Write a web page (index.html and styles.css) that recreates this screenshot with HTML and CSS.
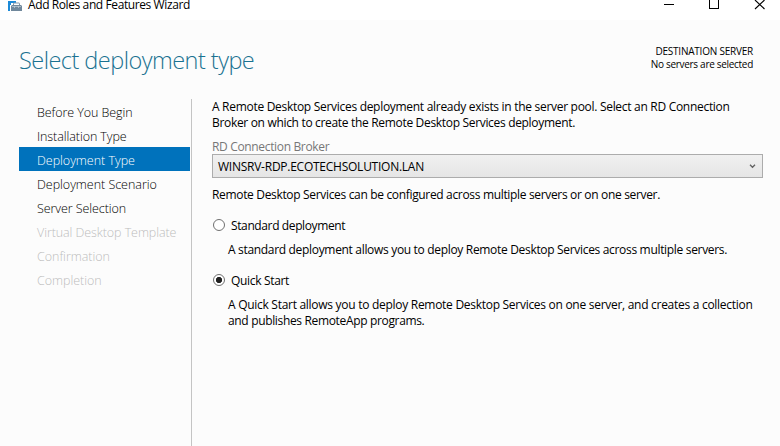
FILE: index.html
```html
<!DOCTYPE html>
<html lang="en">
<head>
<meta charset="utf-8">
<title>Add Roles and Features Wizard</title>
<link rel="stylesheet" href="styles.css">
</head>
<body>
<header class="titlebar">
  <svg class="app-icon" width="16" height="12" viewBox="0 0 16 12">
    <path d="M0 1H8V3H3V5H2V11H0Z" fill="#1c8ad8"/>
    <path d="M5.5 5V3.5Q5.5 3 6 3H11Q11.5 3 11.5 3.5V5" fill="none" stroke="#8295a6"/>
    <path d="M3 6L4 5H13L14 6V11H3Z" fill="#70889c"/>
    <path d="M4 6.5H13" stroke="#c3ced7" stroke-width=".7"/>
    <path d="M6.5 6V8M10.5 6V8" stroke="#c3ced7" stroke-width=".7"/>
  </svg>
  <span class="app-name">Add Roles and Features Wizard</span>
  <svg class="controls" width="104" height="10" viewBox="0 0 104 10" fill="none" stroke="#000" shape-rendering="crispEdges">
    <path d="M0 4.5H10M45.5 -1V8.5H54.5V-1"/>
    <path d="M91 0L100.5 9M100.5 0L91 9" shape-rendering="auto" stroke-width="1.1"/>
  </svg>
</header>
<section class="heading">
  <h1>Select deployment type</h1>
  <div class="destination">
    <div class="dest-label">DESTINATION SERVER</div>
    <div class="dest-value">No servers are selected</div>
  </div>
</section>
<div class="content">
  <nav class="steps">
    <a class="step t06">Before You Begin</a>
    <a class="step t06">Installation Type</a>
    <a class="step active">Deployment Type</a>
    <a class="step">Deployment Scenario</a>
    <a class="step t06">Server Selection</a>
    <a class="step disabled t06">Virtual Desktop Template</a>
    <a class="step disabled">Confirmation</a>
    <a class="step disabled">Completion</a>
  </nav>
  <main class="page">
    <p><span class="t295">A Remote Desktop Services deployment already exists in the server pool. Select an RD Connection</span><br><span class="t32">Broker on which to create the Remote Desktop Services deployment.</span></p>
    <div class="field-label t34">RD Connection Broker</div>
    <div class="combo">
      <span class="combo-value t27">WINSRV-RDP.ECOTECHSOLUTION.LAN</span>
      <svg class="arrow" width="7" height="5" viewBox="0 0 7 5" fill="none" stroke="#606060" stroke-width="1.3"><path d="M1 .8L3.5 3.3L6 .8"/></svg>
    </div>
    <p class="info t33">Remote Desktop Services can be configured across multiple servers or on one server.</p>
    <div class="option"><i class="radio"></i><span class="t38">Standard deployment</span></div>
    <p class="detail t32">A standard deployment allows you to deploy Remote Desktop Services across multiple servers.</p>
    <div class="option"><i class="radio checked"></i><span class="t32">Quick Start</span></div>
    <p class="detail"><span class="t28">A Quick Start allows you to deploy Remote Desktop Services on one server, and creates a collection</span><br><span class="t34">and publishes RemoteApp programs.</span></p>
  </main>
</div>
</body>
</html>
```
FILE: styles.css
```css
* { box-sizing: border-box; }
body {
  margin: 0;
  height: 446px;
  overflow: hidden;
  display: flex;
  flex-direction: column;
  background: #fcfcfc;
  color: #000;
  font: 12px/16px "Open Sans", "Noto Sans", sans-serif;
}
p, h1 { margin: 0; white-space: nowrap; }
.titlebar {
  flex: none;
  height: 20px;
  display: flex;
  align-items: flex-start;
  padding-left: 8px;
  background: #fff;
}
.app-icon { display: block; }
.app-name { margin-left: 4px; line-height: 10px; letter-spacing: -0.4px; white-space: nowrap; }
.controls { display: block; margin-left: auto; margin-right: 12px; }
.heading {
  flex: none;
  height: 79px;
  display: flex;
  justify-content: space-between;
  padding: 24px 27px 0 19px;
}
h1 {
  color: #1a7291;
  font-size: 23.5px;
  font-weight: 300;
  line-height: 32px;
  letter-spacing: -0.53px;
}
.destination { padding-top: 1px; text-align: right; font-size: 10px; line-height: 13px; white-space: nowrap; }
.dest-label { letter-spacing: -0.22px; }
.dest-value { letter-spacing: -0.3px; }
.content { flex: 1; display: flex; }
.steps {
  width: 192px;
  padding-left: 19px;
  border-right: 1px solid #c4c4c4;
}
.step {
  display: block;
  width: 171px;
  height: 24px;
  padding: 2px 0 0 18px;
  color: #000;
  font-size: 12.5px;
  font-weight: 340;
  line-height: 24px;
  white-space: nowrap;
  letter-spacing: -0.03px;
}
.active { background: #0072bc; color: #fff; }
.disabled { color: #bdbdbd; font-weight: 300; }
.page { flex: 1; padding: 0 17px 0 20px; }
.field-label { margin: 8px 0 -1px; color: #777; }
.combo {
  height: 24px;
  display: flex;
  align-items: center;
  justify-content: space-between;
  padding: 0 6px 0 5px;
  border: 1px solid #acacac;
  background: linear-gradient(#f0f0f0, #e5e5e5);
}
.combo-value { padding-top: 1px; }
.info { margin-top: 9px; }
.option { display: flex; align-items: center; margin-top: 15px; }
.radio {
  width: 12px;
  height: 12px;
  margin: -3px 6px 0 1px;
  border: 1px solid #707070;
  border-radius: 50%;
  background: #fff;
}
.checked { background: radial-gradient(circle, #212121 2.8px, #fff 3.4px); }
.detail { margin: 8px 0 0 16px; }
.t06 { letter-spacing: -0.08px; }
.t27 { letter-spacing: -0.25px; }
.t28 { letter-spacing: -0.282px; }
.t295 { letter-spacing: -0.295px; }
.t32 { letter-spacing: -0.32px; }
.t33 { letter-spacing: -0.332px; }
.t34 { letter-spacing: -0.34px; }
.t38 { letter-spacing: -0.38px; }
```
